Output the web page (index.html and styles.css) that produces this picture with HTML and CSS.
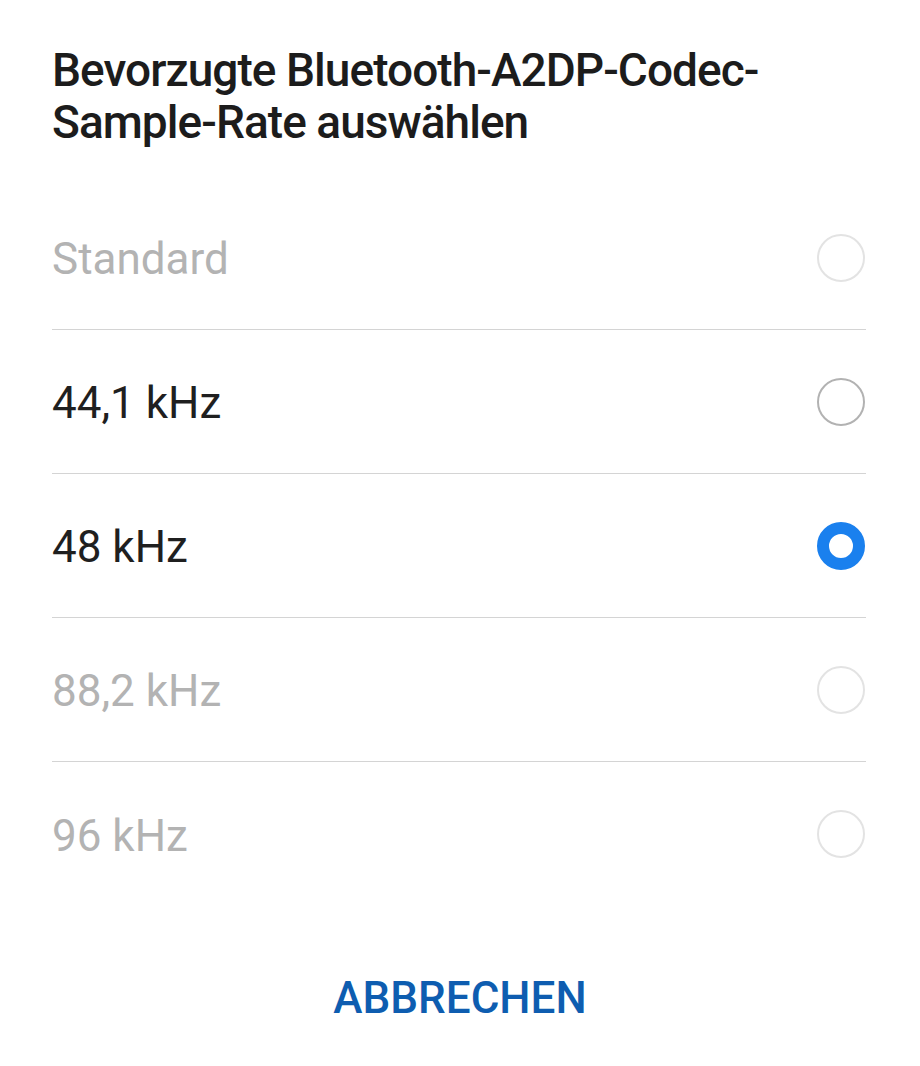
FILE: index.html
```html
<!DOCTYPE html>
<html lang="de">
<head>
<meta charset="utf-8">
<title>Sample-Rate</title>
<link rel="stylesheet" href="styles.css">
</head>
<body>
<div class="dialog">
  <h1 class="title">Bevorzugte Bluetooth-A2DP-Codec-<br>Sample-Rate auswählen</h1>
  <ul class="options">
    <li class="option disabled"><span class="label">Standard</span><span class="radio"></span></li>
    <li class="option"><span class="label">44,1 kHz</span><span class="radio"></span></li>
    <li class="option"><span class="label">48 kHz</span><span class="radio checked"></span></li>
    <li class="option disabled"><span class="label">88,2 kHz</span><span class="radio"></span></li>
    <li class="option disabled"><span class="label">96 kHz</span><span class="radio"></span></li>
  </ul>
  <div class="actions"><button class="btn">ABBRECHEN</button></div>
</div>
</body>
</html>
```
FILE: styles.css
```css
html, body {
  margin: 0;
  padding: 0;
  background: #ffffff;
}
body {
  font-family: Roboto, "Noto Sans", sans-serif;
  width: 920px;
  height: 1066px;
  overflow: hidden;
}
.dialog {
  padding: 44px 54px 0 52px;
}
.title {
  margin: 0;
  font-size: 46px;
  line-height: 52px;
  font-weight: 500;
  color: #1c1c1c;
  letter-spacing: -0.95px;
  white-space: nowrap;
}
.options {
  list-style: none;
  margin: 38px 0 0 0;
  padding: 0;
}
.option {
  height: 144px;
  display: flex;
  align-items: center;
  justify-content: space-between;
  border-bottom: 1px solid #d4d4d4;
  box-sizing: border-box;
}
.option:last-child {
  border-bottom: none;
}
.label {
  font-size: 44px;
  color: #1f1f1f;
  padding-top: 3px;
}
.disabled .label {
  color: #b3b3b3;
}
.radio {
  width: 48px;
  height: 48px;
  box-sizing: border-box;
  border-radius: 50%;
  border: 2.5px solid #b2b2b2;
  margin-right: 1px;
}
.disabled .radio {
  border-color: #e3e3e3;
}
.radio.checked {
  border: 12px solid #1a80ee;
}
.actions {
  display: flex;
  justify-content: center;
  padding-top: 68px;
}
.btn {
  font-family: Roboto, "Noto Sans", sans-serif;
  font-size: 44px;
  font-weight: 500;
  color: #0e5db0;
  background: none;
  border: none;
  padding: 0;
  line-height: 48px;
  margin-left: 2px;
}
```
